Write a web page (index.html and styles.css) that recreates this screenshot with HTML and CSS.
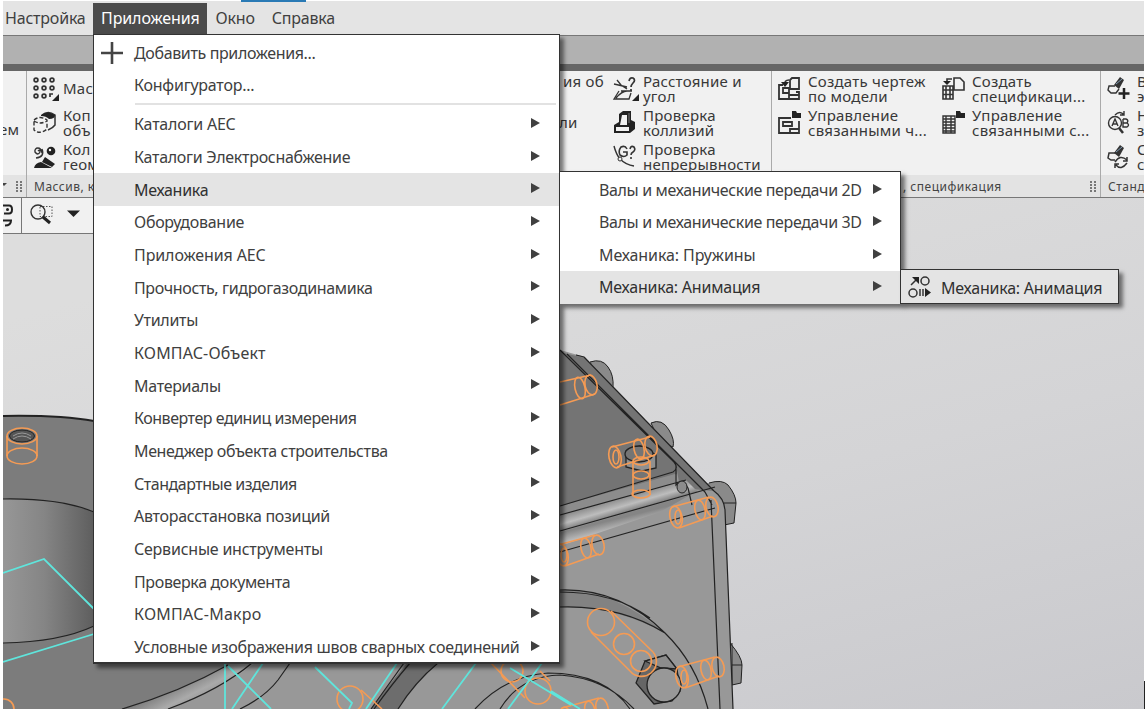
FILE: index.html
```
<!DOCTYPE html>
<html lang="ru">
<head>
<meta charset="utf-8">
<title>КОМПАС</title>
<link rel="stylesheet" href="styles.css">
</head>
<body>
<div class="app">
  <nav class="menubar">
    <span class="tab-mark"></span>
    <span class="mb-item first">Настройка</span>
    <span class="mb-item active">Приложения</span>
    <span class="mb-item">Окно</span>
    <span class="mb-item">Справка</span>
  </nav>
  <div class="tabs"></div>
  <section class="ribbon">
    <div class="group g-edge">
      <div class="tools"><span class="cut">ем</span></div>
      <div class="caption"><b class="caret"></b><i class="grip"></i></div>
    </div>
    <div class="group g-array">
      <div class="tools col">
        <div class="tool one"><svg class="ic" viewBox="0 0 24 24"><g fill="none" stroke="#333" stroke-width="1.7"><circle cx="3" cy="3" r="1.900"/><circle cx="11" cy="3" r="1.900"/><circle cx="19" cy="3" r="1.900"/><circle cx="3" cy="11" r="1.900"/><circle cx="11" cy="11" r="1.900"/><circle cx="19" cy="11" r="1.900"/><circle cx="3" cy="19" r="1.900"/><circle cx="11" cy="19" r="1.900"/><path d="M17 20v-3h3"/></g><path d="M26 17v7h-7z" fill="#222"/></svg><span>Мас</span></div>
        <div class="tool"><svg class="ic" viewBox="0 0 24 24"><path d="M9 4Q15 -1 22 4V14Q20 17 15 19" fill="none" stroke="#333" stroke-width="1.5"/><path d="M8 4Q15 -1 22 4Q22 8 16 8Q13 5 8 5z" fill="#222"/><path d="M1 9Q7 4 14 9V18Q7 24 1 19zM1 10Q7 14 14 10" fill="none" stroke="#333" stroke-width="1.4" stroke-dasharray="4 2"/></svg><span>Коп<br>объ</span></div>
        <div class="tool"><svg class="ic" viewBox="0 0 24 24"><path d="M9 8C8 1 1 2 2 7Q5 11 7 7Q7 4 5 6M9 4Q12 12 3 13" fill="none" stroke="#333" stroke-width="1.4"/><circle cx="18" cy="6" r="4.300" fill="#222"/><circle cx="17" cy="5" r="1.200" fill="#fff"/><path d="M12 12L22 19L19 22L9 17zM1 23Q2 18 8 17L19 23z" fill="#222"/></svg><span>Кол<br>геом</span></div>
      </div>
      <div class="caption">Массив, к</div>
    </div>
    <div class="group g-diag">
      <div class="tools">
        <div class="hidden-col"><span class="tail1">ия об</span><span class="tail2">ли</span></div>
        <div class="col">
          <div class="tool"><svg class="ic" viewBox="0 0 24 24"><path d="M1 7L14 10M4 3L8 8L14 12M6 14L1 22H16L18 16M8 14H19M3 21Q9 14 14 14" fill="none" stroke="#333" stroke-width="1.3"/><path d="M16 4Q17 0 20 1Q23 3 20 6Q18 8 18 10M18 12v2" fill="none" stroke="#333" stroke-width="1.7"/><path d="M26 17v7h-7z" fill="#222"/></svg><span>Расстояние и<br>угол</span></div>
          <div class="tool"><svg class="ic" viewBox="0 0 24 24"><path d="M6 3L10 0H18V9L22 11V18L17 22H1V14L6 11z" fill="#222"/><path d="M9 4H14V14H7zM3 16H16V20H3z" fill="#f1f1f1"/><path d="M16 2V12" stroke="#777" fill="none"/></svg><span>Проверка<br>коллизий</span></div>
          <div class="tool"><svg class="ic" viewBox="0 0 24 24"><path d="M1 1Q3 9 7 14Q13 20 21 21" fill="none" stroke="#333" stroke-width="1.4"/><circle cx="7" cy="14" r="2" fill="#f1f1f1" stroke="#333"/><path d="M14 4Q12 0 8 2Q5 6 7 10Q11 13 14 10V7H10M17 4Q18 0 21 2Q23 5 20 7Q18 8 18 10M18 12v2" fill="none" stroke="#333" stroke-width="1.6"/></svg><span>Проверка<br>непрерывности</span></div>
        </div>
      </div>
      <div class="caption"></div>
    </div>
    <div class="group g-draw">
      <div class="tools">
        <div class="col c1">
          <div class="tool"><svg class="ic" viewBox="0 0 24 24"><path d="M5 8H1V22H21V15H18M12 3L14 1H21V12H12zM11 22V18H21M5 11H11V16H5z" fill="none" stroke="#333" stroke-width="1.8"/><path d="M7 8Q6 3 11 3" fill="none" stroke="#333" stroke-width="1.6"/><path d="M3 5h8L7 10z" fill="#222"/></svg><span>Создать чертеж<br>по модели</span></div>
          <div class="tool"><svg class="ic" viewBox="0 0 24 24"><path d="M13 7H1V22H21V10M12 22V18H21M5 11H14V15H5z" fill="none" stroke="#333" stroke-width="1.8"/><path d="M14 0H18L19 2H23V7H14z" fill="#222"/></svg><span>Управление<br>связанными ч...</span></div>
        </div>
        <div class="col c2">
          <div class="tool"><svg class="ic" viewBox="0 0 24 24"><path d="M1 9H11V22H1zM1 13H11M1 17.500H11M4 9V22M8 9V22M5 7V2H10M12 1H18L22 5V13H12z" fill="none" stroke="#333" stroke-width="1.6"/><path d="M1 4H9L5 8z" fill="#222"/></svg><span>Создать<br>спецификаци...</span></div>
          <div class="tool"><svg class="ic" viewBox="0 0 24 24"><path d="M1 5H13V22H1zM1 8H13M1 11H13M1 14H13M1 17H13M1 20H13M4 5V22M9 5V22" fill="none" stroke="#333" stroke-width="1.4"/><path d="M14 0H18L19 2H23V7H14z" fill="#222"/></svg><span>Управление<br>связанными с...</span></div>
        </div>
      </div>
      <div class="caption end"><span>, спецификация</span><i class="grip"></i></div>
    </div>
    <div class="group g-std">
      <div class="tools col">
        <div class="tool"><svg class="ic" viewBox="0 0 24 24"><path d="M7 8L13 0L17 3L12 12z" fill="#333"/><path d="M9 7L15 2" stroke="#7d98b0"/><path d="M8 9H2L1 13L4 16H9L12 12" fill="none" stroke="#333" stroke-width="1.4"/><path d="M17 11V22M11.500 16.500H22.500" stroke="#222" stroke-width="2.500"/></svg><span>В<br>э</span></div>
        <div class="tool"><svg class="ic" viewBox="0 0 24 24"><circle cx="8" cy="12" r="6.500" fill="none" stroke="#333" stroke-width="1.4"/><path d="M5 15L8 8L11 15M6 13H10M16 8V16H20Q23 14 20 12H16M20 12Q22 9 19 8H16M8 4Q13 -1 17 4M17 0V4H13" fill="none" stroke="#333" stroke-width="1.4"/><path d="M12 17L16 22" stroke="#333" stroke-width="2.500"/></svg><span>Н<br>з</span></div>
        <div class="tool"><svg class="ic" viewBox="0 0 24 24"><path d="M7 8L13 0L17 3L12 12z" fill="#333"/><path d="M9 7L15 2" stroke="#7d98b0"/><path d="M8 8H2L1 13L4 15H8M8 17Q13 9 20 15M20 12V16H16M20 18Q14 26 9 20M8 23V19H12" fill="none" stroke="#333" stroke-width="1.5"/></svg><span>С<br>с</span></div>
      </div>
      <div class="caption">Станд</div>
    </div>
  </section>

  <main class="viewport">
    <svg class="scene" viewBox="3 198 1141 511">
      <defs>
        <linearGradient id="bore"><stop offset="0" stop-color="#979797"/><stop offset=".45" stop-color="#858585"/><stop offset="1" stop-color="#5e5e5e"/></linearGradient>
        <linearGradient id="pipe" gradientUnits="userSpaceOnUse" x1="612" y1="499" x2="619" y2="523"><stop offset="0" stop-color="#858585"/><stop offset=".4" stop-color="#bdbdbd"/><stop offset=".65" stop-color="#858585"/><stop offset="1" stop-color="#7b7b7b"/></linearGradient>
        <linearGradient id="pipe2" gradientUnits="userSpaceOnUse" x1="612" y1="520" x2="617" y2="540"><stop offset="0" stop-color="#858585"/><stop offset=".5" stop-color="#bdbdbd"/><stop offset="1" stop-color="#999"/></linearGradient>
        <linearGradient id="fillet" gradientUnits="userSpaceOnUse" x1="180" y1="682" x2="192" y2="706"><stop offset="0" stop-color="#7c7c7c"/><stop offset=".6" stop-color="#aaa"/><stop offset="1" stop-color="#949494"/></linearGradient>
      </defs>
      <!-- left flange and bore -->
      <path d="M3 416Q60 415 94 421L240 450V709H3z" fill="#7c7c7c"/>
      <path d="M3 416Q60 415 94 421" class="edge thick"/>
      <path d="M3 499Q60 498 94 512V626Q60 642 3 643z" fill="url(#bore)"/>
      <path d="M3 499Q60 498 94 512M94 626Q60 642 3 643" class="edge"/>
      <!-- bottom casting -->
      <path d="M122 709Q180 692 232 663H570V709z" fill="#989898"/>
      <path d="M122 709Q180 692 228 665L255 663Q220 690 168 709z" fill="url(#fillet)"/>
      <path d="M122 709Q180 692 228 665M168 709Q220 690 252 663M240 709Q265 697 278 680L290 663" class="edge"/>
      <path d="M371 709Q389 684 408 662H438Q415 682 398 709z" fill="#6d6d6d"/>
      <path d="M371 709Q389 684 404 663M374 709Q392 684 410 663M398 709Q415 682 438 663" class="edge"/>
      <!-- bolts behind the right plate -->
      <g fill="#8a8a8a" stroke="#222">
        <path d="M590 362Q602 358 608 367Q614 375 613 388L600 380z"/>
        <path d="M651 423Q662 418 669 430Q675 440 673 447L660 442z"/>
        <path d="M709 483Q722 479 728 485Q736 495 736 503L734 523L724 525L700 486M724 503H736"/>
        <path d="M730 643Q742 657 742 665L741 683L732 685V643M732 665H742"/>
      </g>
      <!-- right housing -->
      <path d="M560 350L585 357L714 491L725 506L733 709H560z" fill="#989898"/>
      <path d="M560 350L677 465L677 474L560 507z" fill="#747474"/>
      <path d="M564 353L585 358L714 491L680 488L676 465z" fill="#747474"/>
      <path d="M560 506L675 474V488L560 520z" fill="#8c8c8c"/>
      <path d="M560 515L686 480L698 492L560 531z" fill="url(#pipe)"/>
      <path d="M560 532L690 495L660 512L560 546z" fill="url(#pipe2)"/>
      <path d="M560 350L674 462Q679 468 673 472L560 506M567 354L705 492M576 355L584 357L714 491M560 515L686 480M560 531L715 487M560 552L715 508M676 465V485Q682 478 688 488L692 505M714 491Q724 498 725 510L733 709M711 500L720 709M705 492L712 505" class="edge"/>
      <ellipse cx="682" cy="487" rx="5" ry="6" fill="#8c8c8c" stroke="#222"/>
      <path d="M560 590Q612 588 665 633Q612 605 560 607z" fill="#828282"/>
      <path d="M560 590Q620 588 665 633Q696 663 708 709M560 592Q615 592 650 618M560 607Q620 605 665 633" class="edge"/>
      <path d="M475 709Q505 676 548 673Q605 673 630 709M500 709Q520 676 560 675Q605 678 634 709" class="edge"/>
      <g stroke="#222" stroke-width="1.3">
        <path d="M626 451L640 446L656 455V468L642 471L626 467z" fill="#909090"/>
        <ellipse cx="639" cy="454" rx="14" ry="8" fill="#757575"/>
        <path d="M636 683L645 661L666 655L677 669L680 691L672 701L654 704z" fill="#666"/>
        <path d="M645 661L666 655L677 669L661 668z" fill="#8c8c8c"/>
        <circle cx="664" cy="685" r="17" fill="#989898"/>
      </g>
      <!-- thread sketches -->
      <g class="thread">
        <ellipse cx="22" cy="436" rx="15" ry="8"/><ellipse cx="22" cy="456" rx="15" ry="8"/><path d="M7 436V456M37 436V456"/>
        <path d="M560 382L591 375M560 405L595 394"/><ellipse cx="591" cy="385" rx="6" ry="10" transform="rotate(-12 591 385)"/><ellipse cx="580" cy="388" rx="5" ry="11" transform="rotate(-12 580 388)"/>
        <g><path d="M612 447L650 437M617 467L655 455"/><ellipse cx="615" cy="457" rx="6" ry="11" transform="rotate(-12 615 457)"/><ellipse cx="616" cy="457" rx="3" ry="7"/><ellipse cx="639" cy="449" rx="5" ry="10" transform="rotate(-12 639 449)"/><ellipse cx="651" cy="446" rx="6" ry="10" transform="rotate(-12 651 446)"/></g>
        <path d="M633 461V495M650 461V495"/><ellipse cx="641" cy="461" rx="8" ry="4"/><ellipse cx="641" cy="475" rx="8" ry="4"/><ellipse cx="641" cy="494" rx="9" ry="4"/>
        <g id="pin"><path d="M672 507L709 497M679 528L713 516"/><ellipse cx="676" cy="517" rx="6" ry="11" transform="rotate(-12 676 517)"/><ellipse cx="678" cy="517" rx="3" ry="7"/><ellipse cx="700" cy="510" rx="5" ry="10" transform="rotate(-12 700 510)"/><ellipse cx="712" cy="507" rx="6" ry="10" transform="rotate(-12 712 507)"/></g>
        <use href="#pin" x="-114" y="38"/>
        <use href="#pin" x="6" y="160"/>
        <use href="#pin" x="-110" y="201"/>
        <circle cx="601" cy="622" r="13.500"/><circle cx="624" cy="644" r="10.500"/><circle cx="641" cy="661" r="10.500"/><path d="M653 652A13 13 0 0 1 630 671"/>
        <path d="M611 611L653 652M591 632L630 671"/>
        <circle cx="350" cy="699" r="13"/><path d="M361 690L382 709M491 663L525 698M540 671L550 681"/><circle cx="512" cy="671" r="11"/><circle cx="538" cy="691" r="13"/><circle cx="4" cy="709" r="10"/>
      </g>
      <ellipse cx="22" cy="436" rx="12.500" ry="6" fill="#555" stroke="#222"/>
      <path d="M13 436Q22 430 31 436M13 439Q22 433 31 439" stroke="#999" fill="none"/>
      <!-- axes -->
      <path class="axis" d="M3 573L44 559L94 609M3 662L94 634M225 663V709M228 666L271 709M263 663L232 709M315 667L352 703L349 709M397 663L366 709M476 663L442 709M510 668L571 705M542 663L508 709M551 691L580 709"/>
    </svg>
    <div class="viewbar">
      <svg class="vb1" viewBox="0 0 18 34"><path d="M0 7H6Q9 7 9 11Q9 15 6 15H1M0 22H8Q8 27 2 27" fill="none" stroke="#222" stroke-width="2"/><circle cx="4.500" cy="11" r="1.500" fill="#222"/></svg>
      <svg class="vb2" viewBox="0 0 70 34"><rect x="18" y="8.500" width="12" height="10" fill="none" stroke="#555" stroke-dasharray="1.500 1.500"/><circle cx="16" cy="14" r="7" fill="none" stroke="#333" stroke-width="1.4"/><path d="M21 19L28 25" stroke="#222" stroke-width="3"/><path d="M45 12.500H58L51.500 19z" fill="#222"/></svg>
    </div>
  </main>

  <div class="menu main-menu">
    <div class="mi t4"><svg class="plus" viewBox="0 0 22 22"><path d="M11 0V22M0 11H22" stroke="#444" stroke-width="2.600"/></svg>Добавить приложения...</div>
    <div class="mi t2">Конфигуратор...</div>
    <div class="sep"></div>
    <div class="mi sub t2">Каталоги AEC</div>
    <div class="mi sub t3">Каталоги Электроснабжение</div>
    <div class="mi sub on t3">Механика</div>
    <div class="mi sub t3">Оборудование</div>
    <div class="mi sub t1">Приложения AEC</div>
    <div class="mi sub t4">Прочность, гидрогазодинамика</div>
    <div class="mi sub t3">Утилиты</div>
    <div class="mi sub w1">КОМПАС-Объект</div>
    <div class="mi sub t3">Материалы</div>
    <div class="mi sub t5">Конвертер единиц измерения</div>
    <div class="mi sub t4">Менеджер объекта строительства</div>
    <div class="mi sub t5">Стандартные изделия</div>
    <div class="mi sub t3">Авторасстановка позиций</div>
    <div class="mi sub t2">Сервисные инструменты</div>
    <div class="mi sub t4">Проверка документа</div>
    <div class="mi sub w2">КОМПАС-Макро</div>
    <div class="mi sub t3">Условные изображения швов сварных соединений</div>
  </div>
  <div class="menu mech-menu">
    <div class="mi sub t4">Валы и механические передачи 2D</div>
    <div class="mi sub t4">Валы и механические передачи 3D</div>
    <div class="mi sub t1">Механика: Пружины</div>
    <div class="mi sub on t2">Механика: Анимация</div>
  </div>
  <div class="menu anim-menu">
    <div class="mi on t2"><svg class="anim" viewBox="0 0 24 24"><g fill="none" stroke="#333" stroke-width="1.5"><circle cx="17" cy="6" r="4"/><circle cx="5" cy="18" r="4"/><path d="M3 10L9 4M12 14V21M15 14V21"/></g><path d="M4 2H11V9zM17 13L23 17.500L17 22z" fill="#222"/></svg>Механика: Анимация</div>
  </div>
  <span class="cursor"></span>
</div>
</body>
</html>
```
FILE: styles.css
```
* { box-sizing: border-box; }
body { margin: 0; background: #fff; font-family: "Noto Sans", "Open Sans", sans-serif; color: #404040; overflow: hidden; }
.app { position: relative; display: flex; flex-direction: column; width: 1147px; height: 712px; padding: 1px 3px 3px; }

.menubar { position: relative; display: flex; height: 34px; background: #e4e4e4; font-size: 16px; line-height: 31px; padding-top: 2px; letter-spacing: -.2px; }
.tab-mark { position: absolute; left: 238px; top: -1px; width: 65px; height: 2px; background: #2a7ab5; }
.mb-item { padding: 0 8.5px; white-space: nowrap; }
.mb-item.first { width: 90px; padding: 0 0 0 2px; }
.mb-item.active { width: 114px; padding: 0 8px; background: #4b4b4b; color: #fff; letter-spacing: -.1px; }
.tabs { height: 36px; background: #b1b1b1; border-top: 1px solid #777; border-bottom: 7px solid #666; }

.ribbon { display: flex; height: 127px; background: #f1f1f1; border-bottom: 1px solid #777; overflow: hidden; }
.group { display: flex; flex-direction: column; flex: none; overflow: hidden; }
.group + .group { border-left: 1px solid #aaa; }
.g-edge { width: 23px; }
.g-array { width: 493px; }
.g-diag { width: 252px; }
.g-draw { width: 329px; }
.g-std { width: 44px; }
.tools { display: flex; height: 104px; font-size: 15px; line-height: 15px; color: #383838; letter-spacing: .23px; }
.col { display: flex; flex-direction: column; padding: 3px 0 0 6px; }
.tool { display: flex; flex: none; gap: 6px; height: 34px; white-space: nowrap; }
.tool.one { line-height: 29px; }
.ic { width: 24px; height: 24px; margin-top: 3px; flex: none; overflow: visible; }
.cut { padding-top: 51px; margin-left: -4px; }
.hidden-col { display: flex; flex-direction: column; width: 87px; align-items: flex-start; padding-left: 40px; }
.tail1 { padding: 3px 0 0 3px; white-space: nowrap; }
.tail2 { padding-top: 26px; margin-left: -1px; }
.c1 { width: 164px; }
.caption { display: flex; align-items: center; height: 22px; background: #e3e3e3; font-size: 12px; padding-left: 7px; white-space: nowrap; color: #444; letter-spacing: .5px; }
.caption.end { justify-content: space-between; padding: 0 4px 0 131px; }
.g-edge .caption { padding: 0 4px 0 0; justify-content: space-between; }
.caret { border: 3px solid transparent; border-top-color: #444; margin-left: -2px; }
.grip { width: 6px; height: 11px; background: repeating-linear-gradient(#777 0 2px, transparent 2px 3px); -webkit-mask: linear-gradient(90deg, #000 0 2px, transparent 2px 4px, #000 4px 6px); mask: linear-gradient(90deg, #000 0 2px, transparent 2px 4px, #000 4px 6px); }

.viewport { position: relative; height: 511px; background: linear-gradient(165deg, #dddddd 15%, #d4d4d6 60%, #c9c9cd); overflow: hidden; }
.scene { display: block; width: 1141px; height: 511px; }
.edge { fill: none; stroke: #222; stroke-width: 1.2; }
.thick { stroke-width: 2; }
.thread { fill: none; stroke: #f59b54; stroke-width: 1.6; }
.axis { fill: none; stroke: #5fe5dc; stroke-width: 1.8; }
.viewbar { position: absolute; left: 0; top: 0; display: flex; width: 300px; height: 36px; background: #f1f1f1; border-bottom: 1px solid #777; }
.vb1 { width: 19px; height: 35px; border-right: 1px solid #777; }
.vb2 { width: 70px; height: 34px; }

.menu { position: absolute; display: flex; flex-direction: column; background: #fff; border: 1px solid #333; box-shadow: 4px 4px 4px rgba(0,0,0,.5); font-size: 16px; white-space: nowrap; }
.mi { position: relative; display: flex; align-items: center; flex: none; height: 32.66px; padding-left: 40px; }
.mi.on { background: #e4e4e4; color: #303030; }
.mi.sub::after { content: ""; position: absolute; right: 19px; top: 10px; border-left: 9px solid #404040; border-top: 5px solid transparent; border-bottom: 5px solid transparent; }
.main-menu { left: 93px; top: 34px; width: 467px; height: 630px; padding-top: 1.5px; border-width: 1px 1px 2px; }
.sep { flex: none; height: 2px; margin: 1.5px 3px 2.7px 41px; background: #e2e2e2; }
.plus { position: absolute; left: 7px; top: 5px; width: 22px; height: 22px; }
.mech-menu { left: 559px; top: 171px; width: 342px; height: 133px; padding-top: 1.5px; border-bottom-width: 2px; }
.mech-menu .mi { padding-left: 39px; height: 32.5px; }
.mech-menu .sub::after { right: 18px; }
.anim-menu { left: 900px; top: 269px; width: 219px; height: 35px; }
.anim-menu .mi { height: 33px; padding: 2px 0 0 40px; }
.anim { position: absolute; left: 7px; top: 5px; width: 24px; height: 24px; }
.cursor { position: absolute; left: 1144px; top: 681px; width: 1px; height: 28px; background: #222; }

/* label tracking */
.t1 { letter-spacing: -.1px; }
.t2 { letter-spacing: -.22px; }
.t3 { letter-spacing: -.29px; }
.t4 { letter-spacing: -.36px; }
.t5 { letter-spacing: -.47px; }
.w1 { letter-spacing: .15px; }
.w2 { letter-spacing: .25px; }
```
